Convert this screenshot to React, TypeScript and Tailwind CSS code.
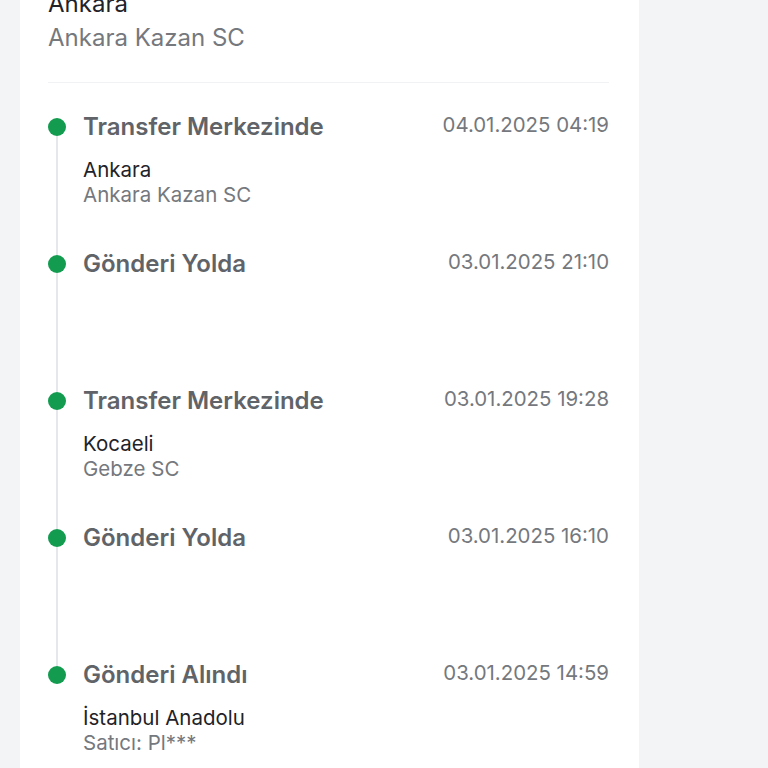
import React from 'react';

interface TrackingEvent {
  title: string;
  date: string;
  city?: string;
  place?: string;
}

const events: TrackingEvent[] = [
  { title: 'Transfer Merkezinde', date: '04.01.2025 04:19', city: 'Ankara', place: 'Ankara Kazan SC' },
  { title: 'Gönderi Yolda', date: '03.01.2025 21:10' },
  { title: 'Transfer Merkezinde', date: '03.01.2025 19:28', city: 'Kocaeli', place: 'Gebze SC' },
  { title: 'Gönderi Yolda', date: '03.01.2025 16:10' },
  { title: 'Gönderi Alındı', date: '03.01.2025 14:59', city: 'İstanbul Anadolu', place: 'Satıcı: Pl***' },
];

export default function App() {
  return (
    <div
      className="min-h-screen bg-[#f3f4f6] flex overflow-hidden"
      style={{ fontFamily: 'Inter, "Noto Sans", sans-serif' }}
    >
      <div className="ml-[20px] w-[619px] bg-white pl-[28px] pr-[30px] h-[768px] overflow-hidden">
        <div className="-mt-[11px]">
          <div className="text-[24px] leading-[30px] text-[#1f2329]">Ankara</div>
          <div className="text-[24px] leading-[30px] text-[#75787d] mt-[4px]">Ankara Kazan SC</div>
        </div>
        <div className="mt-[29px] h-px bg-[#f1f2f4]" />

        <div className="mt-[28px]">
          {events.map((ev, i) => (
            <div key={i} className="flex h-[137px]">
              <div className="w-[18px] flex flex-col items-center shrink-0">
                <div className={`h-[7px] w-[2px] ${i === 0 ? '' : 'bg-[#e5e7eb]'}`} />
                <div className="h-[18px] w-[18px] rounded-full bg-[#139c50] shrink-0" />
                <div className={`flex-1 w-[2px] ${i === events.length - 1 ? '' : 'bg-[#e5e7eb]'}`} />
              </div>
              <div className="ml-[17px] flex-1">
                <div className="flex justify-between items-start">
                  <div className="text-[24px] leading-[32px] font-semibold text-[#606368]">{ev.title}</div>
                  <div className="text-[20.4px] leading-[28px] text-[#75787d]">{ev.date}</div>
                </div>
                {ev.city && (
                  <div className="mt-[14px]">
                    <div className="text-[20.5px] leading-[25px] text-[#1f2329]">{ev.city}</div>
                    <div className="text-[20.5px] leading-[25px] text-[#75787d]">{ev.place}</div>
                  </div>
                )}
              </div>
            </div>
          ))}
        </div>
      </div>
    </div>
  );
}
